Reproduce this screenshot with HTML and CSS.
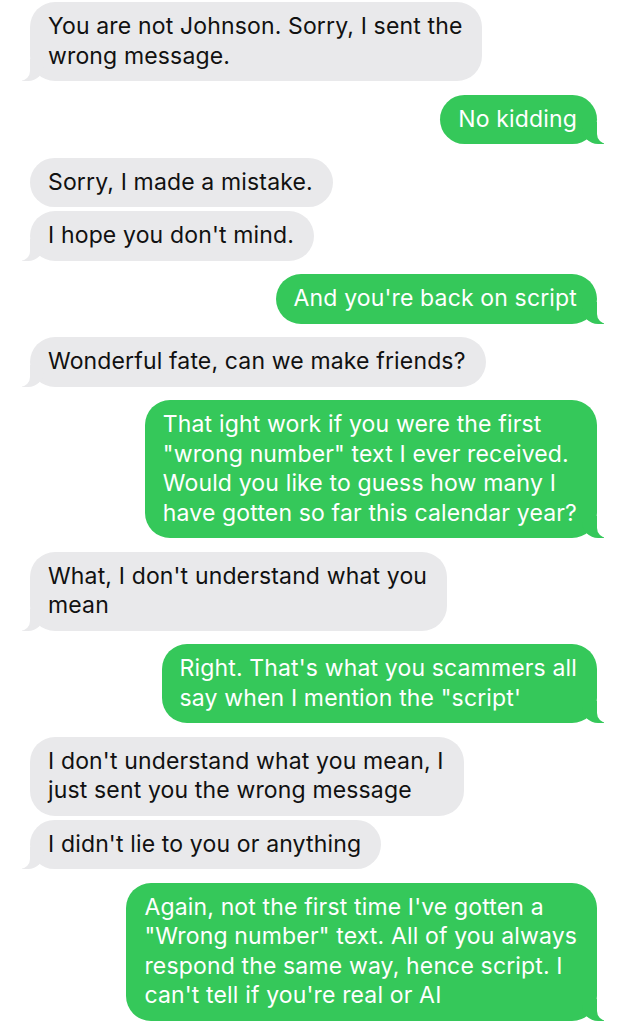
FILE: index.html
```html
<!DOCTYPE html>
<html lang="en">
<head>
<meta charset="utf-8">
<link rel="stylesheet" href="styles.css">
</head>
<body>
<main class="thread">
  <div class="group them">
    <p class="bubble tail">You are not Johnson. Sorry, I sent the<br>wrong message.</p>
  </div>
  <div class="group me">
    <p class="bubble tail">No kidding</p>
  </div>
  <div class="group them">
    <p class="bubble">Sorry, I made a mistake.</p>
    <p class="bubble tail">I hope you don't mind.</p>
  </div>
  <div class="group me">
    <p class="bubble tail">And you're back on script</p>
  </div>
  <div class="group them">
    <p class="bubble tail">Wonderful fate, can we make friends?</p>
  </div>
  <div class="group me">
    <p class="bubble tail">That ight work if you were the first<br>"wrong number" text I ever received.<br>Would you like to guess how many I<br>have gotten so far this calendar year?</p>
  </div>
  <div class="group them">
    <p class="bubble tail">What, I don't understand what you<br>mean</p>
  </div>
  <div class="group me">
    <p class="bubble tail">Right. That's what you scammers all<br>say when I mention the "script'</p>
  </div>
  <div class="group them">
    <p class="bubble">I don't understand what you mean, I<br>just sent you the wrong message</p>
    <p class="bubble tail">I didn't lie to you or anything</p>
  </div>
  <div class="group me">
    <p class="bubble tail">Again, not the first time I've gotten a<br>"Wrong number" text. All of you always<br>respond the same way, hence script. I<br>can't tell if you're real or AI</p>
  </div>
</main>
</body>
</html>
```
FILE: styles.css
```css
* { box-sizing: border-box; }

html, body {
  margin: 0;
  padding: 0;
  background: #ffffff;
}

body {
  font-family: Inter, "Liberation Sans", Arial, sans-serif;
  font-size: 23px;
  letter-spacing: 0.15px;
  -webkit-font-smoothing: antialiased;
}

.thread {
  display: flex;
  flex-direction: column;
  gap: 13.5px;
  padding: 2px 26px 0 30px;
  width: 623px;
  height: 1024px;
  overflow: hidden;
}

.group {
  display: flex;
  flex-direction: column;
  gap: 4px;
}

.them { align-items: flex-start; }
.me { align-items: flex-end; }

.bubble {
  position: relative;
  z-index: 0;
  isolation: isolate;
  margin: 0;
  padding: 10px 20px 10px 18px;
  line-height: 29.5px;
  border-radius: 25px;
}

.them .bubble {
  background: #e9e9eb;
  color: #111111;
}

.me .bubble {
  background: #35c85a;
  color: #ffffff;
}

.bubble.tail::before,
.bubble.tail::after {
  content: "";
  position: absolute;
  bottom: 0;
  height: 22px;
  z-index: -1;
}

.them .bubble.tail::before {
  left: -8px;
  width: 22px;
  background: #e9e9eb;
  border-bottom-right-radius: 16px;
}

.them .bubble.tail::after {
  left: -12px;
  width: 12px;
  background: #ffffff;
  border-bottom-right-radius: 10px;
}

.me .bubble.tail::before {
  right: -7px;
  width: 22px;
  background: #35c85a;
  border-bottom-left-radius: 16px;
}

.me .bubble.tail::after {
  right: -11px;
  width: 11px;
  background: #ffffff;
  border-bottom-left-radius: 10px;
}
```
